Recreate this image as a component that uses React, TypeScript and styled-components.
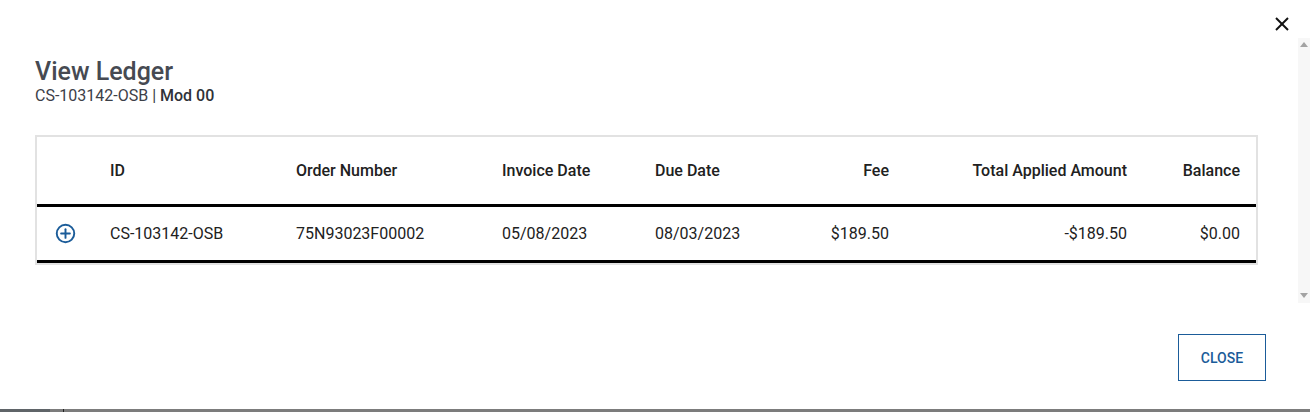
import React from 'react';
import styled, { createGlobalStyle } from 'styled-components';

const GlobalStyle = createGlobalStyle`
  html, body {
    margin: 0;
    padding: 0;
    background: #ffffff;
    font-family: Roboto, "Liberation Sans", Arial, sans-serif;
    color: #212121;
  }
`;

const rows = [
  {
    id: 'CS-103142-OSB',
    order: '75N93023F00002',
    invoiceDate: '05/08/2023',
    dueDate: '08/03/2023',
    fee: '$189.50',
    applied: '-$189.50',
    balance: '$0.00',
  },
];

const columns = [
  { key: 'icon', label: '', width: 57, align: 'left' },
  { key: 'id', label: 'ID', width: 186, align: 'left' },
  { key: 'order', label: 'Order Number', width: 206, align: 'left' },
  { key: 'invoiceDate', label: 'Invoice Date', width: 153, align: 'left' },
  { key: 'dueDate', label: 'Due Date', width: 121, align: 'left' },
  { key: 'fee', label: 'Fee', width: 145, align: 'right' },
  { key: 'applied', label: 'Total Applied Amount', width: 238, align: 'right' },
  { key: 'balance', label: 'Balance', width: 113, align: 'right' },
];

const PlusCircle = () => (
  <svg width="21" height="21" viewBox="0 0 24 24" fill="none" stroke="#1b5c99" strokeWidth="2.2" strokeLinecap="round">
    <circle cx="12" cy="12" r="10" />
    <line x1="12" y1="7" x2="12" y2="17" />
    <line x1="7" y1="12" x2="17" y2="12" />
  </svg>
);

const CloseIcon = () => (
  <svg width="14" height="14" viewBox="0 0 14 14" stroke="#111" strokeWidth="1.9">
    <line x1="1" y1="1" x2="13" y2="13" />
    <line x1="13" y1="1" x2="1" y2="13" />
  </svg>
);

const App = () => {
  return (
    <Page>
      <GlobalStyle />
      <Modal>
        <TopBar>
          <IconButton aria-label="close">
            <CloseIcon />
          </IconButton>
        </TopBar>
        <BodyRow>
          <Content>
            <Title>View Ledger</Title>
            <Subtitle>
              CS-103142-OSB | <b>Mod 00</b>
            </Subtitle>
            <TableBox>
              <Table>
                <colgroup>
                  {columns.map((c) => (
                    <col key={c.key} style={{ width: c.width }} />
                  ))}
                </colgroup>
                <thead>
                  <tr>
                    {columns.map((c) => (
                      <Th key={c.key} $align={c.align}>
                        {c.label}
                      </Th>
                    ))}
                  </tr>
                </thead>
                <tbody>
                  {rows.map((r) => (
                    <tr key={r.id}>
                      <Td $align="left" $icon>
                        <ExpandButton aria-label="expand">
                          <PlusCircle />
                        </ExpandButton>
                      </Td>
                      <Td $align="left">{r.id}</Td>
                      <Td $align="left">{r.order}</Td>
                      <Td $align="left">{r.invoiceDate}</Td>
                      <Td $align="left">{r.dueDate}</Td>
                      <Td $align="right">{r.fee}</Td>
                      <Td $align="right">{r.applied}</Td>
                      <Td $align="right">{r.balance}</Td>
                    </tr>
                  ))}
                </tbody>
              </Table>
            </TableBox>
          </Content>
          <ScrollTrack>
            <Arrow $up />
            <Arrow />
          </ScrollTrack>
        </BodyRow>
        <Footer>
          <OutlineButton>CLOSE</OutlineButton>
        </Footer>
      </Modal>
      <Backdrop>
        <BackdropDark />
        <BackdropTick />
        <BackdropRest />
      </Backdrop>
    </Page>
  );
};

const Page = styled.div`
  width: 1310px;
  height: 412px;
  display: flex;
  flex-direction: column;
  overflow: hidden;
`;

const Modal = styled.div`
  height: 409px;
  background: #ffffff;
  display: flex;
  flex-direction: column;
`;

const TopBar = styled.div`
  height: 38px;
  display: flex;
  justify-content: flex-end;
  align-items: flex-start;
  padding-right: 21px;
`;

const IconButton = styled.button`
  border: none;
  background: none;
  padding: 0;
  margin-top: 17px;
  width: 14px;
  height: 14px;
  display: flex;
  cursor: pointer;
`;

const BodyRow = styled.div`
  height: 265px;
  display: flex;
`;

const Content = styled.div`
  flex: 1;
  padding: 20px 40px 0 35px;
`;

const Title = styled.h2`
  margin: 0;
  font-size: 25px;
  line-height: 28px;
  font-weight: 500;
  color: #464a52;
`;

const Subtitle = styled.div`
  font-size: 16px;
  line-height: 19px;
  color: #3c4048;

  b {
    font-weight: 500;
    color: #2f3238;
  }
`;

const TableBox = styled.div`
  margin-top: 30px;
  border: 2px solid #e2e2e2;
`;

const Table = styled.table`
  width: 100%;
  table-layout: fixed;
  border-collapse: collapse;
`;

const Th = styled.th<{ $align: string }>`
  height: 67px;
  padding: 0 16px;
  text-align: ${(p) => p.$align};
  font-size: 16px;
  font-weight: 500;
  color: #212121;
  border-bottom: 3px solid #000;
  vertical-align: middle;
`;

const Td = styled.td<{ $align: string; $icon?: boolean }>`
  height: 53px;
  padding: ${(p) => (p.$icon ? '0 0 0 18px' : '0 16px')};
  text-align: ${(p) => p.$align};
  font-size: 16px;
  color: #212121;
  border-bottom: 3px solid #000;
  vertical-align: middle;
`;

const ExpandButton = styled.button`
  border: none;
  background: none;
  padding: 0;
  display: flex;
  cursor: pointer;
`;

const ScrollTrack = styled.div`
  width: 12px;
  background: #f7f7f7;
  display: flex;
  flex-direction: column;
  justify-content: space-between;
  align-items: center;
  padding: 4px 0 5px;
`;

const Arrow = styled.div<{ $up?: boolean }>`
  width: 0;
  height: 0;
  border-left: 4px solid transparent;
  border-right: 4px solid transparent;
  ${(p) => (p.$up ? 'border-bottom: 5px solid #a3a3a3;' : 'border-top: 5px solid #a3a3a3;')}
`;

const Footer = styled.div`
  flex: 1;
  display: flex;
  justify-content: flex-end;
  align-items: flex-start;
  padding: 31px 44px 0 0;
`;

const OutlineButton = styled.button`
  width: 88px;
  height: 47px;
  background: #ffffff;
  border: 1px solid #1b5c99;
  border-radius: 0;
  color: #1b5c99;
  font-family: Roboto, "Liberation Sans", Arial, sans-serif;
  font-size: 14px;
  font-weight: 500;
  cursor: pointer;
`;

const Backdrop = styled.div`
  height: 3px;
  display: flex;
`;

const BackdropDark = styled.div`
  width: 50px;
  background: #5f6468;
`;

const BackdropTick = styled.div`
  width: 13px;
  background: #7c7c7c;
  border-right: 1px solid #222;
`;

const BackdropRest = styled.div`
  flex: 1;
  background: #7c7c7c;
`;

export default App;
